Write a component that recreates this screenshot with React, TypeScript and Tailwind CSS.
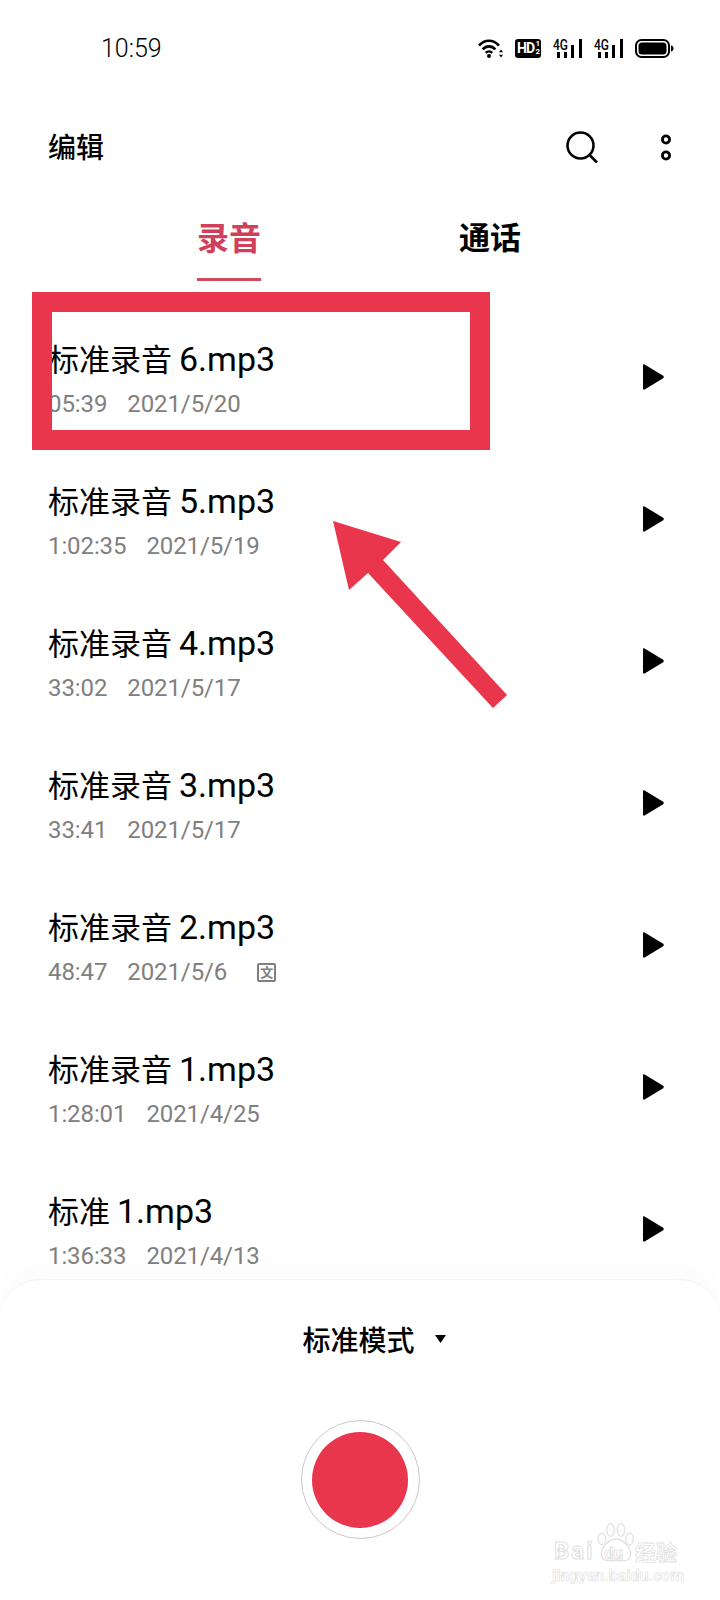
import React from 'react';

const recordings = [
  { label: '标准录音', file: '6.mp3', length: '05:39', date: '2021/5/20' },
  { label: '标准录音', file: '5.mp3', length: '1:02:35', date: '2021/5/19' },
  { label: '标准录音', file: '4.mp3', length: '33:02', date: '2021/5/17' },
  { label: '标准录音', file: '3.mp3', length: '33:41', date: '2021/5/17' },
  { label: '标准录音', file: '2.mp3', length: '48:47', date: '2021/5/6', transcribed: true },
  { label: '标准录音', file: '1.mp3', length: '1:28:01', date: '2021/4/25' },
  { label: '标准', file: '1.mp3', length: '1:36:33', date: '2021/4/13' },
];

const Signal = () => (
  <svg className="-mt-[4px]" width="29" height="23" viewBox="0 -4 29 23" fill="#000">
    <text x="0" y="10.5" fontSize="14" fontWeight="500" fontFamily="Roboto, sans-serif" textLength="15" lengthAdjust="spacingAndGlyphs">4G</text>
    <rect x="4" y="13" width="3" height="6" />
    <rect x="11" y="13" width="3" height="6" />
    <rect x="18" y="6" width="3" height="13" />
    <rect x="26" y="0" width="3" height="19" />
  </svg>
);

const StatusIcons = () => (
  <div className="flex items-center gap-[12px]">
    {/* wifi */}
    <svg width="25" height="19" viewBox="0 0 25 19" fill="none" stroke="#000" strokeWidth="2.6">
      <path d="M1 6.5C6.8 0.2 15.2 0.2 21 6.5" />
      <path d="M4.6 10.4C8.4 6.4 13.6 6.4 17.4 10.4" />
      <path d="M7.8 13.8C9.6 12 12.4 12 14.2 13.8" />
      <circle cx="11" cy="17" r="2" fill="#000" stroke="none" />
      <path d="M23 10.5l-2 2.8h4z M23 18.5l-2-2.8h4z" fill="#000" stroke="none" />
    </svg>
    {/* HD */}
    <div className="w-[26px] h-[19px] rounded-[3px] bg-black flex items-center pl-[2px] gap-[1px] text-white">
      <span className="text-[14px] leading-[19px] font-bold tracking-[-0.8px]">HD</span>
      <span className="flex flex-col text-[8px] leading-[8px] font-bold items-center">
        <span>1</span>
        <span>2</span>
      </span>
    </div>
    <Signal />
    <Signal />
    {/* battery */}
    <svg width="39" height="19" viewBox="0 0 39 19">
      <rect x="1" y="1" width="33" height="17" rx="5.5" fill="none" stroke="#000" strokeWidth="2" />
      <rect x="3.5" y="3.5" width="28" height="12" rx="3.5" fill="#000" />
      <path d="M36 6.5c1.6 0.3 2.5 1.4 2.5 3s-0.9 2.7-2.5 3z" fill="#000" />
    </svg>
  </div>
);

const PlayIcon = () => (
  <svg width="22" height="26" viewBox="0 0 22 26" fill="#000">
    <path d="M1 1.5C1 0.5 1.8 0 2.6 0.5L21.2 11.8C22 12.4 22 13.6 21.2 14.2L2.6 25.5C1.8 26 1 25.5 1 24.5Z" />
  </svg>
);

const Row = ({ item }: { item: (typeof recordings)[number] }) => (
  <div className="h-[142px] shrink-0 flex items-center justify-between pl-[48px] pr-[56px]">
    <div className="flex flex-col pt-[4px]">
      <div className="h-[40px] flex items-baseline text-black whitespace-pre">
        <span className="text-[31px] leading-[40px]">{item.label}</span>
        <span className="ml-[7px] text-[34px] leading-[40px]">{item.file}</span>
      </div>
      <div className="mt-[10px] flex items-center text-[24px] tracking-[-0.1px] leading-[30px] text-[#808080]">
        <span className="mr-[20px]">{item.length}</span>
        <span>{item.date}</span>
        {item.transcribed && (
          <span className="ml-[30px] w-[19px] h-[19px] border-2 border-[#808080] rounded-[2px] flex items-center justify-center text-[13px] leading-none font-bold">
            文
          </span>
        )}
      </div>
    </div>
    <PlayIcon />
  </div>
);

// faint "Baidu 经验" stamp in the corner
const Watermark = () => (
  <div className="absolute left-[552px] top-[1523px] w-[130px] h-[62px] text-white">
    <svg className="absolute left-[45px] top-0" width="38" height="40" viewBox="0 0 38 40" fill="#fff" stroke="#e2e2e2" strokeWidth="1.3">
      <ellipse cx="5" cy="16" rx="3.8" ry="6" />
      <ellipse cx="13.5" cy="7" rx="3.8" ry="6.3" />
      <ellipse cx="24" cy="7" rx="3.8" ry="6.3" />
      <ellipse cx="32.5" cy="16" rx="3.8" ry="6" />
      <path d="M19 16C27 16 36 27 33 34C31 39 23 38 19 37C15 38 7 39 5 34C2 27 11 16 19 16Z" />
    </svg>
    <span className="absolute left-[2px] top-[16px] text-[24px] leading-[24px] tracking-[2px] font-bold [-webkit-text-stroke:1px_#e2e2e2]">Bai</span>
    <span className="absolute left-[52px] top-[20px] text-[17px] leading-[20px] font-bold [-webkit-text-stroke:0.8px_#e2e2e2]">du</span>
    <span className="absolute left-[83px] top-[18px] text-[21px] leading-[24px] font-bold [-webkit-text-stroke:0.8px_#e2e2e2]">经验</span>
    <div className="absolute left-0 top-[45px] text-[16px] leading-[16px] font-bold [-webkit-text-stroke:0.6px_#e2e2e2]">jingyan.baidu.com</div>
  </div>
);

export default function App() {
  return (
    <div className="relative w-[720px] h-[1600px] overflow-hidden bg-white flex flex-col text-black font-['Roboto','Noto_Sans_CJK_SC',sans-serif]">
      {/* Status bar */}
      <div className="h-[96px] shrink-0 flex items-center justify-between pl-[101px] pr-[46px]">
        <span className="text-[25px] font-light leading-none">10:59</span>
        <StatusIcons />
      </div>

      {/* Header */}
      <div className="h-[104px] shrink-0 flex items-center justify-between pl-[48px] pr-[49px]">
        <span className="text-[28px] leading-none font-medium mt-[1px]">编辑</span>
        <div className="flex items-center gap-[63px] -mt-[2px]">
          <svg width="32" height="32" viewBox="0 0 32 32" fill="none" stroke="#000" strokeWidth="2.6">
            <circle cx="14.5" cy="14.5" r="13" />
            <path d="M24 24.5L31 31.5" />
          </svg>
          <svg width="10" height="27" viewBox="0 0 10 27" fill="none" stroke="#000" strokeWidth="2.8">
            <circle cx="5" cy="5.5" r="3.6" />
            <circle cx="5" cy="21.5" r="3.6" />
          </svg>
        </div>
      </div>

      {/* Tabs */}
      <div className="h-[81px] shrink-0 flex pl-[197px] gap-[198px]">
        <div className="w-[64px] h-full flex flex-col items-center justify-between">
          <span className="mt-[19px] text-[32px] leading-[40px] font-bold text-[#d0405a]">录音</span>
          <div className="w-full h-[3px] bg-[#cf4a5c]" />
        </div>
        <span className="mt-[19px] text-[31px] leading-[40px] font-bold">通话</span>
      </div>

      {/* List */}
      <div className="flex-1 min-h-0 overflow-hidden pt-[25px] flex flex-col">
        {recordings.map((r) => (
          <Row key={r.length + r.date} item={r} />
        ))}
      </div>

      {/* Bottom sheet */}
      <div className="h-[321px] shrink-0 rounded-t-[40px] bg-white border-t border-[#f3f3f3] shadow-[0_-12px_24px_rgba(0,0,0,0.02)] flex flex-col items-center">
        <div className="mt-[42px] h-[40px] flex items-center pl-[28px]">
          <span className="text-[28px] leading-[40px] font-medium">标准模式</span>
          <svg className="ml-[20px] mb-[6px]" width="11" height="8" viewBox="0 0 11 8" fill="#000">
            <path d="M0 0H11L5.5 8Z" />
          </svg>
        </div>
        <div className="mt-[58px] w-[119px] h-[119px] rounded-full border border-[#c9c9c9] flex items-center justify-center">
          <div className="w-[96px] h-[96px] rounded-full bg-[#e9364c]" />
        </div>
      </div>

      {/* Annotation box and arrow */}
      <div className="absolute left-[32px] top-[292px] w-[458px] h-[158px] border-[20px] border-[#e9364c]" />
      <svg className="absolute left-0 top-0" width="720" height="1600" viewBox="0 0 720 1600" fill="#e9364c">
        <path d="M333 521L401 542L383 560L507 695L493 708L368 573L349 590Z" />
      </svg>

      <Watermark />
    </div>
  );
}
